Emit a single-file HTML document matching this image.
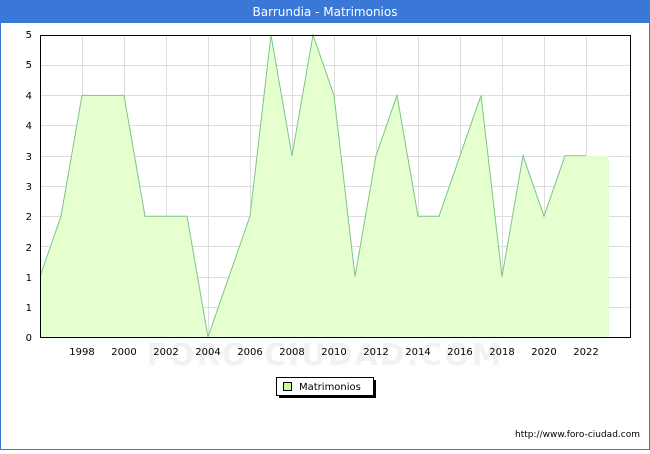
<!DOCTYPE html><html><head><style>body{margin:0;width:650px;height:450px;overflow:hidden;background:#fff;font-family:"DejaVu Sans",sans-serif}</style></head><body>
<svg width="650" height="450" xmlns="http://www.w3.org/2000/svg" font-family="DejaVu Sans, sans-serif">
<rect x="0.5" y="0.5" width="649" height="449" fill="#fff" stroke="#3a78d8"/>
<rect x="0" y="0" width="650" height="23" fill="#3a78d8"/>
<text x="325" y="16" fill="#fff" font-size="12" text-anchor="middle">Barrundia - Matrimonios</text>
<g stroke="#dddddd" stroke-width="1">
<line x1="40" x2="630" y1="307.5" y2="307.5"/><line x1="40" x2="630" y1="277.5" y2="277.5"/><line x1="40" x2="630" y1="246.5" y2="246.5"/><line x1="40" x2="630" y1="216.5" y2="216.5"/><line x1="40" x2="630" y1="186.5" y2="186.5"/><line x1="40" x2="630" y1="156.5" y2="156.5"/><line x1="40" x2="630" y1="125.5" y2="125.5"/><line x1="40" x2="630" y1="95.5" y2="95.5"/><line x1="40" x2="630" y1="65.5" y2="65.5"/>
<line y1="35" y2="338" x1="82.5" x2="82.5"/><line y1="35" y2="338" x1="124.5" x2="124.5"/><line y1="35" y2="338" x1="166.5" x2="166.5"/><line y1="35" y2="338" x1="208.5" x2="208.5"/><line y1="35" y2="338" x1="250.5" x2="250.5"/><line y1="35" y2="338" x1="292.5" x2="292.5"/><line y1="35" y2="338" x1="334.5" x2="334.5"/><line y1="35" y2="338" x1="376.5" x2="376.5"/><line y1="35" y2="338" x1="418.5" x2="418.5"/><line y1="35" y2="338" x1="460.5" x2="460.5"/><line y1="35" y2="338" x1="502.5" x2="502.5"/><line y1="35" y2="338" x1="544.5" x2="544.5"/><line y1="35" y2="338" x1="586.5" x2="586.5"/>
</g>
<text x="325" y="365" font-size="30" fill="#f2f2f2" text-anchor="middle" font-weight="bold" letter-spacing="2">FORO-CIUDAD.COM</text>
<polygon fill="#e4ffcc" fill-opacity="0.95" stroke="none" points="40,337 40,276.6 61,216.2 82,95.4 103,95.4 124,95.4 145,216.2 166,216.2 187,216.2 208,337 229,276.6 250,216.2 271,35 292,155.8 313,35 334,95.4 355,276.6 376,155.8 397,95.4 418,216.2 439,216.2 460,155.8 481,95.4 502,276.6 523,155.8 544,216.2 565,155.8 586,155.8 609,155.8 609,337"/>
<polyline fill="none" stroke="#7cc58a" stroke-width="1" points="40,276.6 61,216.2 82,95.4 103,95.4 124,95.4 145,216.2 166,216.2 187,216.2 208,337 229,276.6 250,216.2 271,35 292,155.8 313,35 334,95.4 355,276.6 376,155.8 397,95.4 418,216.2 439,216.2 460,155.8 481,95.4 502,276.6 523,155.8 544,216.2 565,155.8 586,155.8"/>
<rect x="40.5" y="35.5" width="590" height="302" fill="none" stroke="#000"/>
<g font-size="10" text-anchor="end" fill="#000">
<text x="32" y="341">0</text><text x="32" y="311">1</text><text x="32" y="281">1</text><text x="32" y="251">2</text><text x="32" y="220">2</text><text x="32" y="190">3</text><text x="32" y="160">3</text><text x="32" y="129">4</text><text x="32" y="99">4</text><text x="32" y="68">5</text><text x="32" y="38">5</text>
</g>
<g font-size="10" text-anchor="middle" fill="#000">
<text x="82" y="355">1998</text><text x="124" y="355">2000</text><text x="166" y="355">2002</text><text x="208" y="355">2004</text><text x="250" y="355">2006</text><text x="292" y="355">2008</text><text x="334" y="355">2010</text><text x="376" y="355">2012</text><text x="418" y="355">2014</text><text x="460" y="355">2016</text><text x="502" y="355">2018</text><text x="544" y="355">2020</text><text x="586" y="355">2022</text>
</g>
<rect x="279" y="380" width="97" height="18" fill="#000"/>
<rect x="276.5" y="377.5" width="97" height="18" fill="#fff" stroke="#000"/>
<rect x="283.5" y="382.5" width="8" height="8" fill="#ccff99" stroke="#000"/>
<text x="299" y="390" font-size="10">Matrimonios</text>
<text x="640" y="437" font-size="9" text-anchor="end">http://www.foro-ciudad.com</text>
</svg></body></html>
